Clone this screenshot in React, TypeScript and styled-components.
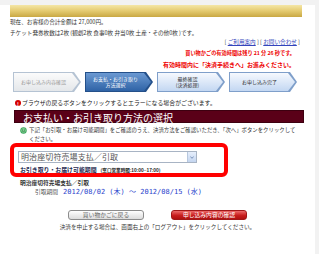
import styled, { createGlobalStyle } from "styled-components";

const GlobalStyle = createGlobalStyle`
  html, body {
    margin: 0;
    padding: 0;
    background: #f2f2f2;
  }
  body {
    font-family: "Noto Sans CJK JP", "Noto Sans", sans-serif;
    color: #333;
  }
`;

interface Step {
  label: string[];
  kind: "done" | "current" | "todo";
}

const steps: Step[] = [
  { label: ["お申し込み内容確認"], kind: "done" },
  { label: ["お支払・お引き取り", "方法選択"], kind: "current" },
  { label: ["最終確認", "(決済処理)"], kind: "todo" },
  { label: ["お申し込み完了"], kind: "todo" },
];

const App = () => {
  return (
    <>
      <GlobalStyle />
      <Panel>
        <GoldBar />
        <Summary>
          <div>現在、お客様の合計金額は 27,000円。</div>
          <div>チケット発券枚数は2枚 (観劇2枚 食事0枚 弁当0枚 土産・その他0枚 )です。</div>
        </Summary>
        <Links>
          [ <a href="#">ご利用案内</a> ] [ <a href="#">お問い合わせ</a> ]
        </Links>
        <Notice>
          <NoticeLine $size={5.2}>買い物かごの有効時間は残り 21 分 26 秒です。</NoticeLine>
          <NoticeLine $size={6}>有効時間内に「決済手続きへ」お進みください。</NoticeLine>
        </Notice>
        <Steps>
          {steps.map((step, index) => (
            <StepOuter key={index} $kind={step.kind}>
              <StepInner $kind={step.kind}>
                {step.label.map((line, i) => (
                  <span key={i}>{line}</span>
                ))}
              </StepInner>
            </StepOuter>
          ))}
        </Steps>
        <Warning>
          <AlertIcon>!</AlertIcon>
          ブラウザの戻るボタンをクリックするとエラーになる場合がございます。
        </Warning>
        <SectionTitle>お支払い・お引き取り方法の選択</SectionTitle>
        <Instruction>
          <Smiley viewBox="0 0 10 10">
            <circle cx="5" cy="5" r="4.6" fill="#3aa35a" />
            <circle cx="5" cy="5" r="3.4" fill="#7bd08f" />
            <circle cx="3.6" cy="4.2" r="0.7" fill="#1d4d2a" />
            <circle cx="6.4" cy="4.2" r="0.7" fill="#1d4d2a" />
            <path d="M3.2 6 Q5 7.6 6.8 6" stroke="#1d4d2a" strokeWidth="0.7" fill="none" />
          </Smiley>
          <div>
            下記「お引取・お届け可能期間」をご確認のうえ、決済方法をご確認いただき、「次へ」ボタンをクリックして
            <br />
            ください。
          </div>
        </Instruction>
        <Highlight>
          <SelectBox>
            <SelectText>明治座切符売場支払／引取</SelectText>
            <SelectArrow>
              <svg viewBox="0 0 6 4" width="4" height="3">
                <path d="M0.5 0.5 L3 3.2 L5.5 0.5" stroke="#4a6a9a" strokeWidth="1" fill="none" />
              </svg>
            </SelectArrow>
          </SelectBox>
          <PeriodLabel>
            お引き取り・お届け可能期間<small>(窓口営業時間:10:00~17:00)</small>
          </PeriodLabel>
        </Highlight>
        <MethodName>明治座切符売場支払／引取</MethodName>
        <PeriodRow>
          <PeriodKey>引取期間</PeriodKey>
          <PeriodDate>2012/08/02 (木) ～ 2012/08/15 (水)</PeriodDate>
        </PeriodRow>
        <Buttons>
          <ActionButton $variant="back">買い物かごに戻る</ActionButton>
          <ActionButton $variant="next">申し込み内容の確認</ActionButton>
        </Buttons>
        <Footer>決済を中止する場合は、画面右上の「ログアウト」をクリックしてください。</Footer>
      </Panel>
    </>
  );
};

export default App;

const Panel = styled("div")`
  width: 315px;
  height: 249px;
  margin-top: 5px;
  background: #ffffff;
  font-size: 5.6px;
`;

const GoldBar = styled("div")`
  height: 12px;
  margin: 0 13px 0 10px;
  background: linear-gradient(#f4e6a6 0%, #e6cd74 45%, #c9a843 100%);
`;

const Summary = styled("div")`
  padding-left: 10px;
  line-height: 11px;
  color: #333;
`;

const Links = styled("div")`
  text-align: right;
  padding-right: 15px;
  line-height: 7px;
  color: #444;

  a {
    color: #3344bb;
    text-decoration: underline;
  }
`;

const Notice = styled("div")`
  margin-top: 1px;
  text-align: right;
  padding-right: 20px;
  color: #ee0000;
  font-weight: bold;
`;

const NoticeLine = styled("div")<{ $size: number }>`
  font-size: ${(p) => p.$size}px;
  line-height: 11.5px;
`;

const Steps = styled("div")`
  display: flex;
  gap: 4px;
  margin-top: 2px;
  padding-left: 13px;
`;

const arrowShape = "polygon(0 0, calc(100% - 7px) 0, 100% 50%, calc(100% - 7px) 100%, 0 100%)";

const StepOuter = styled("div")<{ $kind: Step["kind"] }>`
  width: 68px;
  height: 20px;
  padding: 1px;
  box-sizing: border-box;
  clip-path: ${arrowShape};
  background: ${(p) => (p.$kind === "done" ? "#b5c3d3" : p.$kind === "current" ? "#24508a" : "#7f9fca")};
`;

const StepInner = styled("div")<{ $kind: Step["kind"] }>`
  height: 100%;
  width: calc(100% - 1px);
  clip-path: ${arrowShape};
  display: flex;
  flex-direction: column;
  align-items: center;
  justify-content: center;
  padding-right: 6px;
  box-sizing: border-box;
  font-size: 5px;
  line-height: 6px;
  color: ${(p) => (p.$kind === "done" ? "#9a9a9a" : p.$kind === "current" ? "#ffffff" : "#333")};
  background: ${(p) =>
    p.$kind === "done"
      ? "linear-gradient(#fbfbfb, #e4e7ea)"
      : p.$kind === "current"
      ? "linear-gradient(#6b99d2, #2f63a6)"
      : "linear-gradient(#f6f9fe, #c3d7f2)"};
`;

const Warning = styled("div")`
  display: flex;
  align-items: center;
  gap: 1px;
  margin-top: 6px;
  padding-left: 15px;
  line-height: 10px;
  font-size: 5.9px;
  color: #222;
`;

const AlertIcon = styled("span")`
  display: inline-flex;
  align-items: center;
  justify-content: center;
  width: 6px;
  height: 6px;
  border-radius: 50%;
  background: #d40000;
  color: #fff;
  font-size: 5px;
  font-weight: bold;
  line-height: 1;
`;

const SectionTitle = styled("div")`
  margin: 2px 11px 0 14px;
  height: 13px;
  padding-left: 8px;
  background: #5a0018;
  color: #ffffff;
  font-size: 10px;
  line-height: 13px;
  border: 1px solid #3d0010;
  box-sizing: border-box;
`;

const Instruction = styled("div")`
  display: flex;
  align-items: flex-start;
  gap: 2px;
  margin-top: 3px;
  padding-left: 20px;
  font-size: 5.4px;
  line-height: 9px;
  color: #333;
`;

const Smiley = styled("svg")`
  width: 7px;
  height: 7px;
  margin-top: 1px;
  flex-shrink: 0;
`;

const Highlight = styled("div")`
  position: relative;
  margin: -1px 0 0 10px;
  width: 218px;
  height: 34px;
  box-sizing: border-box;
  border: 4px solid #ff0000;
  border-radius: 6px;
  background: #ffffff;
  padding: 4px 0 0 4px;
`;

const SelectBox = styled("div")`
  display: flex;
  align-items: stretch;
  width: 179px;
  height: 12px;
  box-sizing: border-box;
  border: 1px solid #a8b4c4;
  background: #fff;
`;

const SelectText = styled("span")`
  flex: 1;
  padding-left: 2px;
  font-size: 8px;
  line-height: 10px;
  color: #555;
  letter-spacing: 0.1px;
`;

const SelectArrow = styled("span")`
  display: flex;
  align-items: center;
  justify-content: center;
  width: 8px;
  background: linear-gradient(#e6effc, #c4d6f0);
  border-left: 1px solid #b8c8de;
`;

const PeriodLabel = styled("div")`
  margin-top: 2px;
  padding-left: 2px;
  font-size: 5.9px;
  line-height: 9px;
  font-weight: bold;
  color: #1f2a50;

  small {
    margin-left: 4px;
    font-size: 4.6px;
    color: #222;
  }
`;

const MethodName = styled("div")`
  margin-top: 1px;
  padding-left: 20px;
  font-size: 5.75px;
  line-height: 9px;
  font-weight: bold;
  color: #333;
`;

const PeriodRow = styled("div")`
  display: flex;
  align-items: baseline;
  gap: 5px;
  padding-left: 35px;
  line-height: 9px;
`;

const PeriodKey = styled("span")`
  font-size: 5.75px;
  color: #555;
`;

const PeriodDate = styled("span")`
  font-family: "DejaVu Sans Mono", "Noto Sans CJK JP", monospace;
  font-size: 7px;
  color: #2a44cc;
`;

const Buttons = styled("div")`
  display: flex;
  justify-content: center;
  gap: 27px;
  margin-top: 13px;
  padding-right: 0;
`;

const ActionButton = styled("button")<{ $variant: "back" | "next" }>`
  width: 76px;
  height: 10px;
  padding: 0;
  border-radius: 3px;
  font-family: inherit;
  font-size: 5.8px;
  line-height: 8px;
  cursor: pointer;
  border: 1px solid ${(p) => (p.$variant === "back" ? "#8c8c8c" : "#a01818")};
  color: ${(p) => (p.$variant === "back" ? "#666" : "#ffffff")};
  background: ${(p) =>
    p.$variant === "back"
      ? "linear-gradient(#ffffff, #dcdcdc)"
      : "linear-gradient(#ec6a6a, #c81e1e 55%, #b01010)"};
`;

const Footer = styled("div")`
  margin-top: 3px;
  text-align: center;
  font-size: 5.6px;
  line-height: 8px;
  color: #333;
`;
